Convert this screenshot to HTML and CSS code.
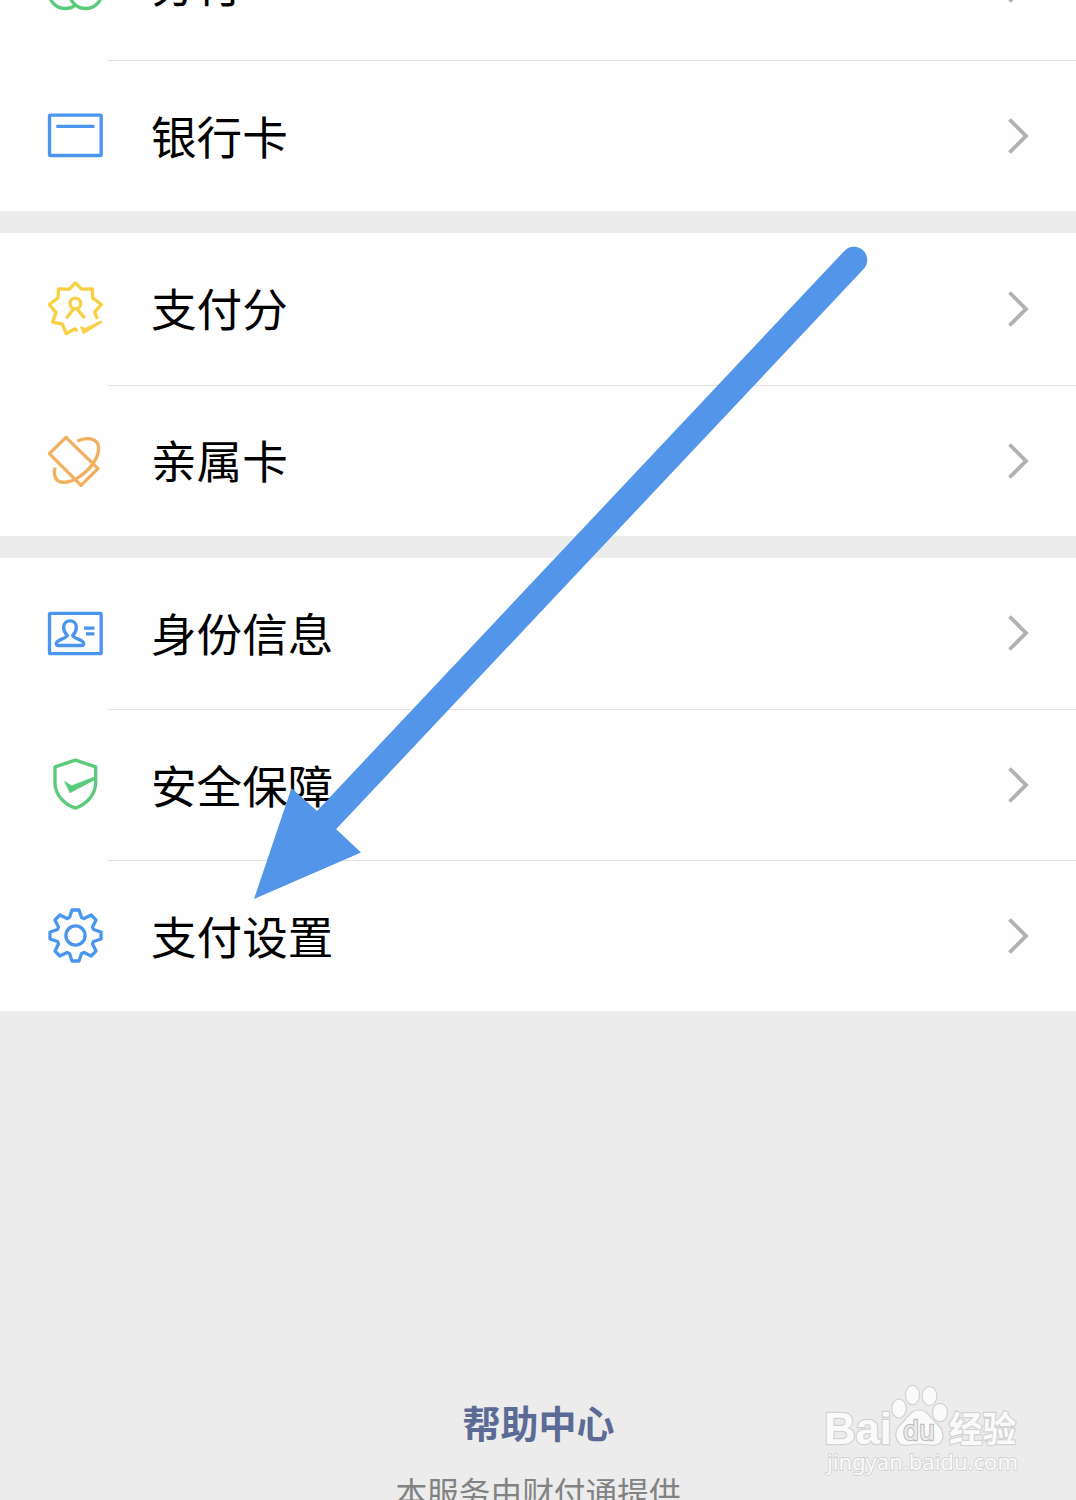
FILE: index.html
```html
<!DOCTYPE html>
<html lang="zh-CN">
<head>
  <meta charset="UTF-8" />
  <meta name="viewport" content="width=device-width, initial-scale=1.0"/>
  <title>支付</title>
  <link rel="stylesheet" href="styles.css">
</head>
<body>
  <svg class="defs" width="0" height="0">
    <symbol id="chevron" viewBox="0 0 22 40">
      <path d="M2.500 3.500 L19 20 L2.500 36.500" fill="none" stroke="#b2b2b2" stroke-width="3.800"/>
    </symbol>
  </svg>

  <main class="page">
    <section class="group">
      <div class="row">
        <svg class="icon green" viewBox="54 -127.5 165 165">
          <circle cx="106" cy="-22" r="49"/>
          <circle class="cover" cx="167" cy="-22" r="49"/>
        </svg>
        <div class="row-body"><span class="title">分付</span><svg class="arrow"><use href="#chevron"/></svg></div>
      </div>
      <div class="row">
        <svg class="icon blue" viewBox="54 326 165 165">
          <rect x="58.5" y="347.5" width="155" height="121" rx="3"/>
          <path d="M79 381 H193"/>
        </svg>
        <div class="row-body"><span class="title">银行卡</span><svg class="arrow"><use href="#chevron"/></svg></div>
      </div>
    </section>

    <section class="group">
      <div class="row">
        <svg class="icon yellow" viewBox="54 48.5 165 165">
          <path d="M202 162 L194 142 L214 119 L188 99 L187 72 L155 73 L136 54 L118 73 L86 72 L84 99 L58 119 L78 143 L68 172 L97 178 L109 206 L134 192 L142 198"/>
          <circle cx="136" cy="116" r="16"/>
          <path d="M109 160 L129 134 M164 160 L143 134"/>
          <path class="fill" d="M151 185 L160 207 L216 173 L213 168 L165 190 Z"/>
        </svg>
        <div class="row-body"><span class="title">支付分</span><svg class="arrow"><use href="#chevron"/></svg></div>
      </div>
      <div class="row">
        <svg class="icon orange" viewBox="54 53 165 165">
          <path d="M108 66 L58 115 L153 210 L204 160 Z"/>
          <path d="M142 77 C172 64 205 68 206 98 C206 118 198 132 189 145 C166 176 131 201 101 201 C77 201 70 182 75 157"/>
        </svg>
        <div class="row-body"><span class="title">亲属卡</span><svg class="arrow"><use href="#chevron"/></svg></div>
      </div>
    </section>

    <section class="group">
      <div class="row">
        <svg class="icon blue" viewBox="54 45.5 165 165">
          <rect x="58.5" y="67.5" width="155" height="121" rx="3"/>
          <path d="M112 134 C104 126 101 117 101 109 C101 84 139 84 139 109 C139 117 136 126 128 134 C130 144 161 145 161 158 Q161 164 155 164 H85 Q79 164 79 158 C79 145 110 144 112 134 Z M162 112 H193 M168 129 H193"/>
        </svg>
        <div class="row-body"><span class="title">身份信息</span><svg class="arrow"><use href="#chevron"/></svg></div>
      </div>
      <div class="row">
        <svg class="icon green" viewBox="54 51.5 165 165">
          <path d="M136 61 L197 81 V128 C197 168 165 196 136 205 C107 196 75 168 75 128 V81 Z"/>
          <path class="fill" d="M104 125 L120 159 L197 118 V110 L125 138 Z"/>
        </svg>
        <div class="row-body"><span class="title">安全保障</span><svg class="arrow"><use href="#chevron"/></svg></div>
      </div>
      <div class="row">
        <svg class="icon blue" viewBox="-27.5 -27.5 55 55">
          <path class="gear" d="M-6 -18 L-3.5 -25.5 H3.5 L6 -18 L8.5 -17 L15.6 -20.5 L20.5 -15.6 L17 -8.5 L18 -6 L25.5 -3.5 V3.5 L18 6 L17 8.5 L20.5 15.6 L15.6 20.5 L8.5 17 L6 18 L3.5 25.5 H-3.5 L-6 18 L-8.5 17 L-15.6 20.5 L-20.5 15.6 L-17 8.5 L-18 6 L-25.5 3.5 V-3.5 L-18 -6 L-17 -8.5 L-20.5 -15.6 L-15.6 -20.5 L-8.5 -17 Z"/>
          <circle class="gear" r="9.6"/>
        </svg>
        <div class="row-body"><span class="title">支付设置</span><svg class="arrow"><use href="#chevron"/></svg></div>
      </div>
    </section>

    <footer class="footer">
      <a class="help">帮助中心</a>
      <p class="provider">本服务由财付通提供</p>
    </footer>

    <!-- pointer to the settings row -->
    <svg class="pointer" viewBox="0 0 1076 1500">
      <path d="M854 260 L320 827" stroke="#5395e9" stroke-width="26.5" stroke-linecap="round"/>
      <path d="M254 899 L291.5 788 L317 811 L336 829 L361 852.5 Z" fill="#5395e9"/>
    </svg>

    <svg class="watermark" viewBox="0 0 210 100">
      <text class="brand" x="4" y="64" textLength="68" lengthAdjust="spacingAndGlyphs">Bai</text>
      <ellipse cx="79" cy="28.5" rx="7.3" ry="9.5"/>
      <ellipse cx="92.5" cy="15" rx="7" ry="9.8"/>
      <ellipse cx="109.5" cy="16" rx="7.5" ry="9.5"/>
      <ellipse cx="120" cy="32.5" rx="7.5" ry="9.2"/>
      <path d="M99 30 C107 30 110 37 115 42 C122 48 125 54 122 60 C118 69 108 64 99 64 C90 64 81 69 77 60 C74 54 76 48 83 42 C88 37 91 30 99 30 Z"/>
      <text class="du" x="83" y="59.5" textLength="32" lengthAdjust="spacingAndGlyphs">du</text>
      <text class="cn" x="129" y="62" textLength="67" lengthAdjust="spacingAndGlyphs">经验</text>
      <text class="url" x="7" y="90" textLength="191" lengthAdjust="spacingAndGlyphs">jingyan.baidu.com</text>
    </svg>
  </main>
</body>
</html>
```

FILE: styles.css
```css
* {
  margin: 0;
  padding: 0;
  box-sizing: border-box;
}
body {
  background: #ececec;
  color: #000;
  font-family: "Noto Sans CJK SC", sans-serif;
  height: 1500px;
  overflow: hidden;
}
.defs {
  position: absolute;
}
.page {
  position: relative;
  height: 1500px;
  overflow: hidden;
  display: flex;
  flex-direction: column;
}
.group {
  background: #fefefe;
  flex-shrink: 0;
  margin-bottom: 22px;
}
/* the list is scrolled, the first row is mostly out of view */
.group:first-of-type {
  margin-top: -91px;
}
.row {
  display: flex;
  align-items: center;
  height: 151.2px;
  padding-left: 48px;
}
.icon {
  width: 55px;
  height: 55px;
  flex-shrink: 0;
  overflow: visible;
  fill: none;
  stroke: currentColor;
  stroke-width: 10;
  stroke-linejoin: round;
  stroke-linecap: butt;
}
.icon .cover {
  fill: #fefefe;
}
.icon .fill {
  fill: currentColor;
  stroke-width: 2;
}
.icon .gear {
  stroke-width: 3.3;
}
.blue {
  color: #4a96ee;
}
.green {
  color: #5bcb7b;
}
.yellow {
  color: #f8d043;
}
.orange {
  color: #f2b05e;
}
.row-body {
  flex: 1;
  height: 100%;
  margin-left: 5px;
  padding: 0 47px 0 43px;
  display: flex;
  align-items: center;
  justify-content: space-between;
}
.row + .row .row-body {
  border-top: 1px solid #e3e3e3;
}
.title {
  font-size: 45.6px;
  line-height: 60px;
  padding-bottom: 3px;
}
.arrow {
  width: 22px;
  height: 40px;
}
.footer {
  flex-shrink: 0;
  margin-top: 361px;
  text-align: center;
}
.help {
  display: block;
  color: #5b6b95;
  font-size: 38px;
  font-weight: 700;
  line-height: 56px;
  padding-left: 1px;
}
.provider {
  margin-top: 18px;
  color: #828282;
  font-size: 31.7px;
  line-height: 46px;
}
.pointer {
  position: absolute;
  left: 0;
  top: 0;
  width: 1076px;
  height: 1500px;
  pointer-events: none;
}
.watermark {
  position: absolute;
  left: 820px;
  top: 1380px;
  width: 210px;
  height: 100px;
  fill: #fafafa;
  stroke: #d2d2d2;
  stroke-width: 1.2;
}
.watermark text {
  paint-order: stroke;
  stroke-width: 2.4;
}
.watermark .brand {
  font: 700 44px "Liberation Sans", sans-serif;
}
.watermark .du {
  font: 400 26px "DejaVu Sans", sans-serif;
  fill: #ececec;
  stroke: #c0c0c0;
}
.watermark .cn {
  font: 700 35px "Noto Sans CJK SC", sans-serif;
}
.watermark .url {
  font: 400 22.5px "Noto Sans", sans-serif;
  stroke-width: 1.8;
}
```
